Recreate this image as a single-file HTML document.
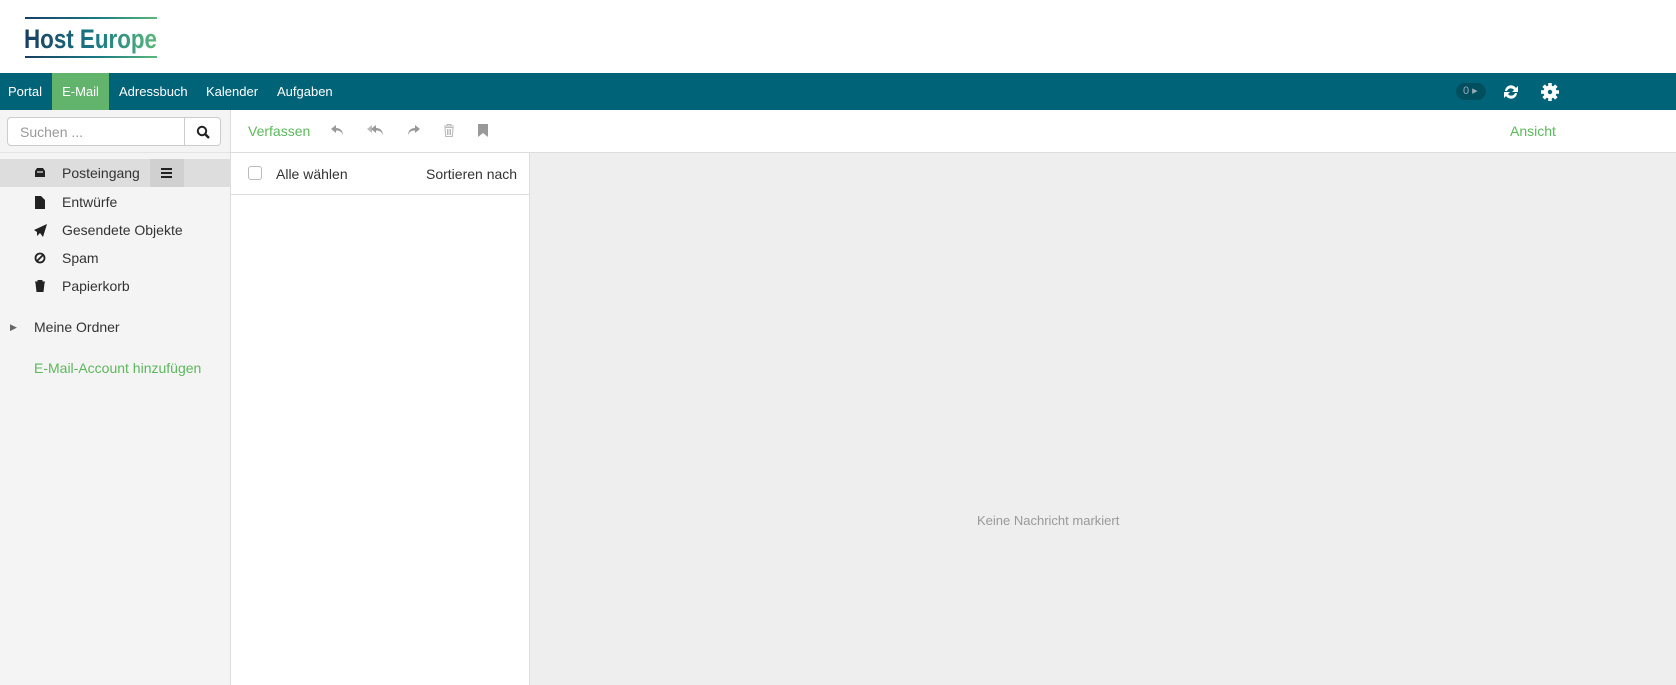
<!DOCTYPE html>
<html><head><meta charset="utf-8"><style>
*{margin:0;padding:0;box-sizing:border-box}
body{width:1676px;height:685px;overflow:hidden;font-family:"Liberation Sans",sans-serif;font-size:14px;color:#333;background:#fff;position:relative}
.hdr{position:absolute;left:0;top:0;width:1676px;height:73px;background:#fff}
.nav{position:absolute;left:0;top:73px;width:1676px;height:37px;background:#006378;color:#fff;font-size:13px}
.nav span{position:absolute;top:0;height:37px;line-height:37px}
.side{position:absolute;left:0;top:110px;width:231px;height:575px;background:#f4f4f4;border-right:1px solid #ddd}
.search{position:absolute;left:7px;top:7px;width:214px;height:29px;border:1px solid #ccc;border-radius:4px;background:#fff}
.search .t{position:absolute;left:12px;top:6px;color:#999;font-size:14px}
.search .b{position:absolute;right:0;top:0;width:36px;height:27px;border-left:1px solid #ccc}
.sline{position:absolute;left:0;top:42px;width:230px;border-top:1px solid #e4e4e4}
.f{position:absolute;left:0;width:230px;height:28px;line-height:28px}
.f .l{position:absolute;left:62px}
.f svg{position:absolute;left:34px;top:8px}
.tb{position:absolute;left:231px;top:110px;width:1445px;height:43px;border-bottom:1px solid #ddd;background:#fff}
.list{position:absolute;left:231px;top:153px;width:299px;height:532px;background:#fff;border-right:1px solid #ddd}
.right{position:absolute;left:530px;top:153px;width:1146px;height:532px;background:#eee}
.g{color:#5cb85c}
</style></head><body>
<div class="hdr">
<svg width="140" height="45" style="position:absolute;left:24px;top:15px">
<defs><linearGradient id="lg" x1="0" x2="1"><stop offset="0" stop-color="#183d62"/><stop offset="0.55" stop-color="#1a7a84"/><stop offset="1" stop-color="#5cb87a"/></linearGradient></defs>
<rect x="1" y="2" width="132" height="2" fill="url(#lg)"/>
<rect x="1" y="41" width="132" height="2" fill="url(#lg)"/>
<text x="0" y="33" font-family="Liberation Sans" font-weight="bold" font-size="27" fill="url(#lg)" textLength="133" lengthAdjust="spacingAndGlyphs">Host Europe</text>
</svg>
</div>
<div class="nav">
<span style="left:8px">Portal</span>
<span style="left:52px;width:57px;background:#62b46d;text-align:center">E-Mail</span>
<span style="left:119px">Adressbuch</span>
<span style="left:206px">Kalender</span>
<span style="left:277px">Aufgaben</span>
<div style="position:absolute;left:1456px;top:10px;width:30px;height:17px;border-radius:9px;background:#004f5f;color:#9ab;font-size:11px;line-height:17px;padding-left:7px">0 ▸</div>
<svg width="18" height="18" viewBox="0 0 18 18" style="position:absolute;left:1502px;top:10px"><path d="M3 8a6 6 0 0 1 11-3l2-2v6h-6l2-2a4 4 0 0 0-7 1z M15 10a6 6 0 0 1-11 3l-2 2V9h6l-2 2a4 4 0 0 0 7-1z" fill="#fff"/></svg>
<svg width="18" height="18" viewBox="0 0 18 18" style="position:absolute;left:1541px;top:10px"><g stroke="#fff" stroke-width="3.5"><path d="M9 0v18M0 9h18M2.6 2.6l12.8 12.8M15.4 2.6L2.6 15.4"/></g><circle cx="9" cy="9" r="5" fill="none" stroke="#fff" stroke-width="3"/><circle cx="9" cy="9" r="2.2" fill="#006378"/></svg>
</div>
<div class="side">
<div class="search"><span class="t">Suchen ...</span><div class="b"><svg width="14" height="14" viewBox="0 0 14 14" style="position:absolute;left:11px;top:7px"><circle cx="6" cy="6" r="4.2" fill="none" stroke="#222" stroke-width="2"/><path d="M9 9l4 4" stroke="#222" stroke-width="2.4"/></svg></div></div>
<div class="sline"></div>
<div class="f" style="top:49px;background:#ddd"><svg width="12" height="12"><path d="M1 4l2-3h6l2 3v6H1z" fill="#222"/><path d="M3 5h6" stroke="#ddd" stroke-width="1.3"/></svg><span class="l">Posteingang</span><div style="position:absolute;left:150px;top:0;width:34px;height:28px;background:#d0d0d0"><div style="position:absolute;left:11px;top:9px;width:11px;height:2px;background:#222;box-shadow:0 4px #222,0 8px #222"></div></div></div>
<div class="f" style="top:78px"><svg width="12" height="13"><path d="M1 0h6l4 4v9H1z" fill="#222"/></svg><span class="l">Entwürfe</span></div>
<div class="f" style="top:106px"><svg width="13" height="13"><path d="M0 6l13-6-4 13-3-4-3 3V8z" fill="#222"/></svg><span class="l">Gesendete Objekte</span></div>
<div class="f" style="top:134px"><svg width="12" height="12"><circle cx="6" cy="6" r="4.5" fill="none" stroke="#222" stroke-width="1.8"/><path d="M3 9l6-6" stroke="#222" stroke-width="1.8"/></svg><span class="l">Spam</span></div>
<div class="f" style="top:162px"><svg width="12" height="12"><path d="M1 2h10M4 2V0h4v2M2 3h8l-1 9H3z" fill="#222" stroke="#222" stroke-width="1"/></svg><span class="l">Papierkorb</span></div>
<div class="f" style="top:203px"><span style="position:absolute;left:10px;font-size:9px;color:#666">▶</span><span style="position:absolute;left:34px">Meine Ordner</span></div>
<div class="f g" style="top:244px"><span style="position:absolute;left:34px">E-Mail-Account hinzufügen</span></div>
</div>
<div class="tb">
<span class="g" style="position:absolute;left:17px;top:13px">Verfassen</span>
<svg width="16" height="14" viewBox="0 0 16 14" style="position:absolute;left:99px;top:14px"><path d="M6 1L1 5l5 4V6.5c4 0 6 1.5 7 5 0-5-3-7.5-7-7.5z" fill="#999"/></svg>
<svg width="18" height="14" viewBox="0 0 18 14" style="position:absolute;left:136px;top:14px"><path d="M5 1L0 5l5 4z" fill="#bbb"/><path d="M9 1L4 5l5 4V6.5c4 0 6 1.5 7 5 0-5-3-7.5-7-7.5z" fill="#999"/></svg>
<svg width="16" height="14" viewBox="0 0 16 14" style="position:absolute;left:174px;top:14px"><path d="M10 1l5 4-5 4V6.5c-4 0-6 1.5-7 5 0-5 3-7.5 7-7.5z" fill="#999"/></svg>
<svg width="12" height="13" viewBox="0 0 12 13" style="position:absolute;left:212px;top:14px"><path d="M1 2h10M4 2V0.5h4V2M2 3.5h8l-.7 9H2.7z" fill="none" stroke="#bbb" stroke-width="1.1"/><path d="M4.5 5v6M6 5v6M7.5 5v6" stroke="#bbb"/></svg>
<svg width="10" height="13" viewBox="0 0 10 13" style="position:absolute;left:247px;top:14px"><path d="M0 0h10v13L5 9 0 13z" fill="#999"/></svg>
<span class="g" style="position:absolute;left:1279px;top:13px">Ansicht</span>
</div>
<div class="list">
<div style="position:absolute;left:17px;top:13px;width:14px;height:14px;border:1px solid #bbb;border-radius:3px"></div>
<span style="position:absolute;left:45px;top:13px">Alle wählen</span>
<span style="position:absolute;left:195px;top:13px">Sortieren nach</span>
<div style="position:absolute;left:0;top:41px;width:298px;border-top:1px solid #ddd"></div>
</div>
<div class="right"><span style="position:absolute;left:447px;top:360px;color:#999;font-size:13px">Keine Nachricht markiert</span></div>
</body></html>
